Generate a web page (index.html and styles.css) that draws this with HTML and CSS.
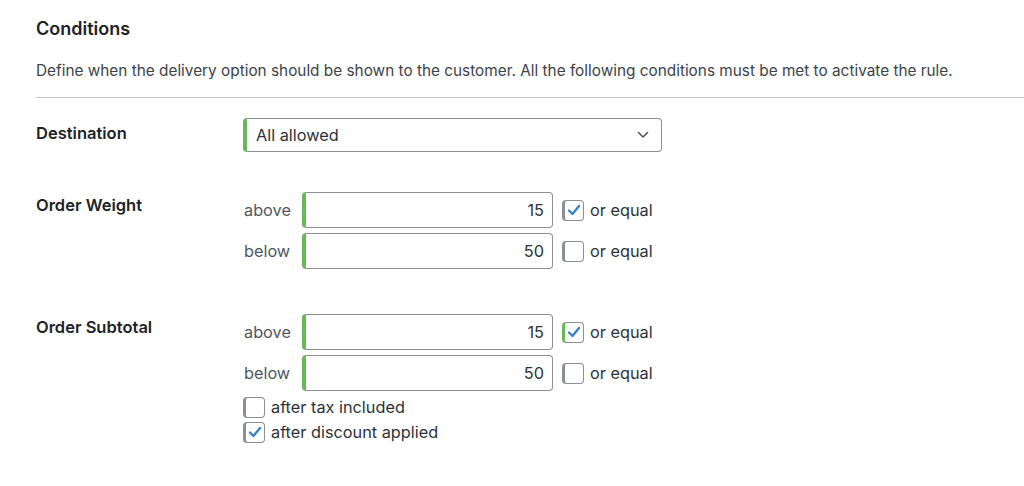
FILE: index.html
```html
<!DOCTYPE html>
<html lang="en">
<head>
  <meta charset="UTF-8">
  <title>Conditions</title>
  <link rel="stylesheet" href="styles.css">
</head>
<body>
  <div class="page">
    <h2 class="title">Conditions</h2>
    <p class="desc">Define when the delivery option should be shown to the customer. All the following conditions must be met to activate the rule.</p>
    <hr class="divider">

    <div class="row row-destination">
      <div class="row-label">Destination</div>
      <div class="row-field">
        <div class="select">
          <span>All allowed</span>
          <svg class="chevron" width="12" height="8" viewBox="0 0 12 8"><path d="M1.5 1.5 L6 6 L10.5 1.5" fill="none" stroke="#50575e" stroke-width="1.6" stroke-linecap="round" stroke-linejoin="round"/></svg>
        </div>
      </div>
    </div>

    <div class="row row-weight">
      <div class="row-label">Order Weight</div>
      <div class="row-field">
        <div class="range">
          <span class="range-label">above</span>
          <input class="num" type="text" value="15">
          <span class="check checked"><svg width="14" height="12" viewBox="0 0 14 12"><path d="M2 6.5 L5.5 10 L12 2" fill="none" stroke="#3582c4" stroke-width="2.3" stroke-linecap="round" stroke-linejoin="round"/></svg></span>
          <span class="check-text">or equal</span>
        </div>
        <div class="range">
          <span class="range-label">below</span>
          <input class="num" type="text" value="50">
          <span class="check"></span>
          <span class="check-text">or equal</span>
        </div>
      </div>
    </div>

    <div class="row row-subtotal">
      <div class="row-label">Order Subtotal</div>
      <div class="row-field">
        <div class="range">
          <span class="range-label">above</span>
          <input class="num" type="text" value="15">
          <span class="check checked active"><svg width="14" height="12" viewBox="0 0 14 12"><path d="M2 6.5 L5.5 10 L12 2" fill="none" stroke="#3582c4" stroke-width="2.3" stroke-linecap="round" stroke-linejoin="round"/></svg></span>
          <span class="check-text">or equal</span>
        </div>
        <div class="range">
          <span class="range-label">below</span>
          <input class="num" type="text" value="50">
          <span class="check"></span>
          <span class="check-text">or equal</span>
        </div>
        <div class="option first">
          <span class="check"></span>
          <span class="check-text">after tax included</span>
        </div>
        <div class="option">
          <span class="check checked"><svg width="14" height="12" viewBox="0 0 14 12"><path d="M2 6.5 L5.5 10 L12 2" fill="none" stroke="#3582c4" stroke-width="2.3" stroke-linecap="round" stroke-linejoin="round"/></svg></span>
          <span class="check-text">after discount applied</span>
        </div>
      </div>
    </div>
  </div>
</body>
</html>
```

FILE: styles.css
```css
body {
  margin: 0;
  background-color: #ffffff;
  font-family: Inter, "Noto Sans", sans-serif;
  color: #1d2327;
}

.page {
  padding: 18px 0 0 36px;
}

.title {
  margin: 0;
  font-size: 18px;
  line-height: 22px;
  font-weight: 600;
  color: #1d2327;
}

.desc {
  margin: 21px 0 0;
  font-size: 15.35px;
  line-height: 20px;
  color: #3c434a;
}

.divider {
  margin: 16px 0 0;
  border: none;
  border-top: 1px solid #c3c4c7;
}

.row {
  display: flex;
}

.row-destination {
  margin-top: 20px;
}

.row-weight {
  margin-top: 40px;
}

.row-subtotal {
  margin-top: 40px;
}

.row-label {
  width: 207px;
  flex-shrink: 0;
  font-size: 16.5px;
  font-weight: 600;
  line-height: 20px;
  padding-top: 3px;
}

.row-destination .row-label {
  padding-top: 5px;
}

.select {
  width: 419px;
  height: 34px;
  box-sizing: border-box;
  border: 1px solid #8c8f94;
  border-left: 4px solid #68b75b;
  border-radius: 4px;
  display: flex;
  align-items: center;
  justify-content: space-between;
  padding: 0 12px 0 9px;
  font-size: 16.3px;
  color: #2c3338;
}

.range {
  display: flex;
  align-items: center;
  height: 36px;
  margin-bottom: 5px;
}

.range-label {
  width: 59px;
  padding-left: 1px;
  box-sizing: border-box;
  font-size: 16.3px;
  color: #50575e;
}

.num {
  width: 251px;
  height: 36px;
  box-sizing: border-box;
  border: 1px solid #8c8f94;
  border-left: 4px solid #68b75b;
  border-radius: 4px;
  padding: 0 8px;
  text-align: right;
  font-family: Inter, "Noto Sans", sans-serif;
  font-size: 16.3px;
  color: #2c3338;
  outline: none;
  margin: 0 9px 0 0;
}

.check {
  width: 22px;
  height: 21px;
  box-sizing: border-box;
  border: 1px solid #8c8f94;
  border-left: 3px solid #8c8f94;
  border-radius: 4px;
  display: inline-flex;
  align-items: center;
  justify-content: center;
  flex-shrink: 0;
}

.check.active {
  border-left-color: #68b75b;
}

.check-text {
  margin-left: 6px;
  font-size: 16.3px;
  color: #2c3338;
}

.option {
  display: flex;
  align-items: center;
  height: 22px;
  margin-top: 3px;
}

.option.first {
  margin-top: 1px;
}
```
